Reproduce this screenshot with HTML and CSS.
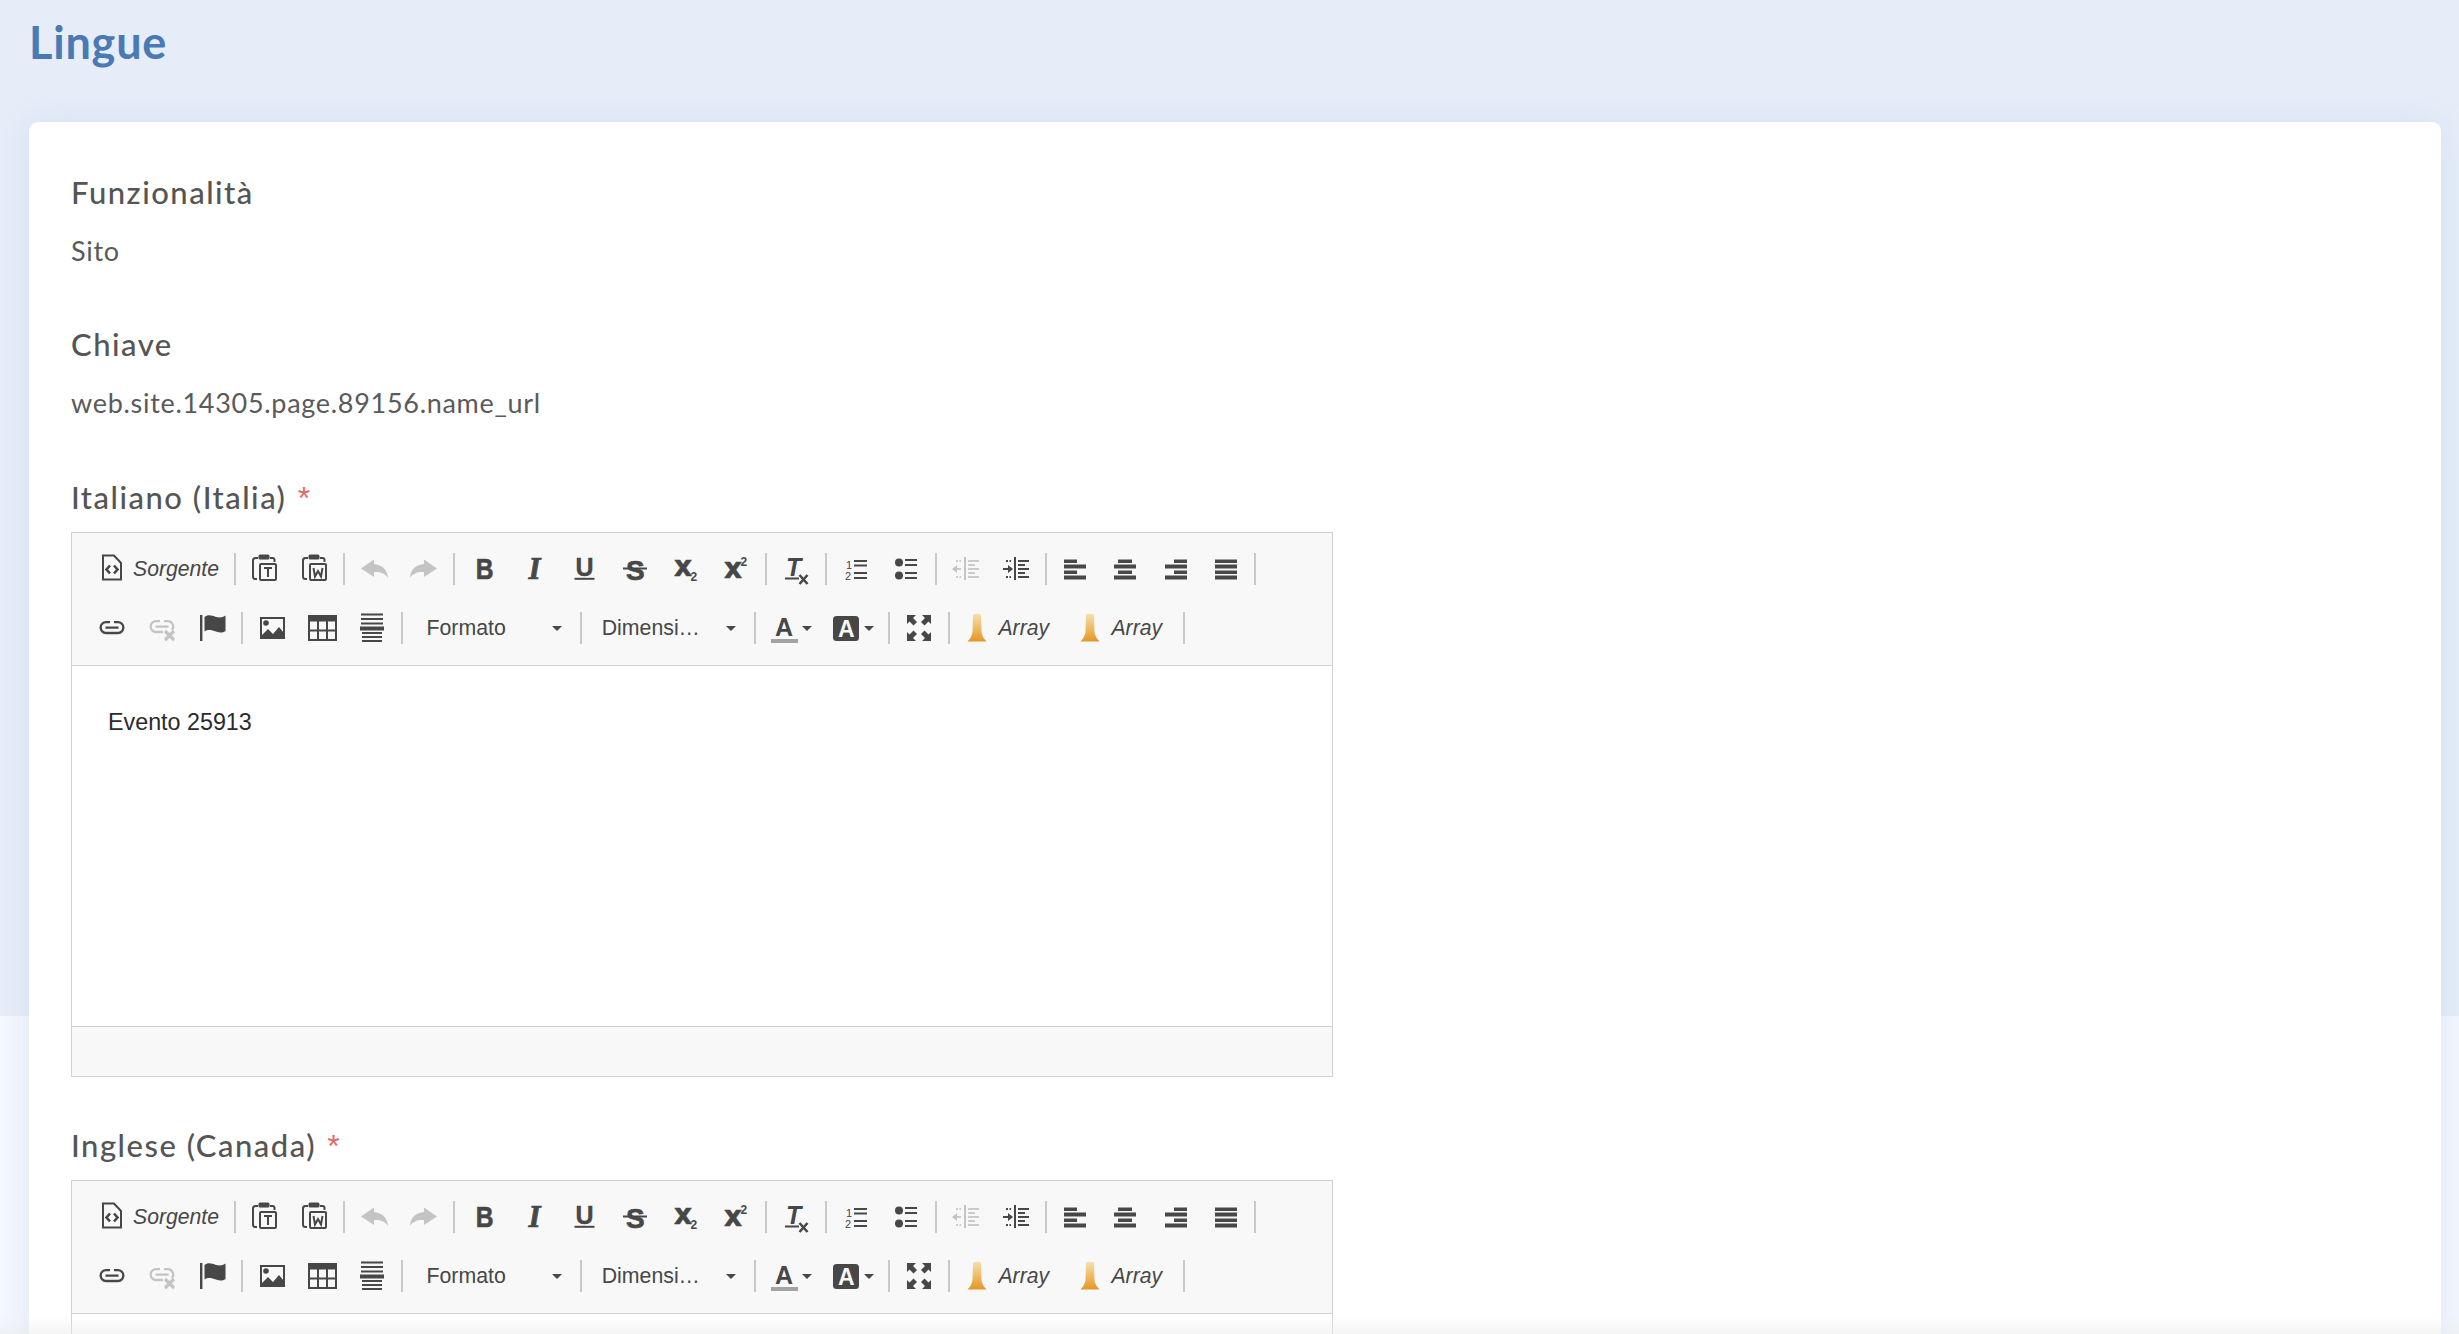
FILE: index.html
```html
<!DOCTYPE html>
<html lang="it">
<head>
<meta charset="utf-8">
<title>Lingue</title>
<link rel="stylesheet" href="styles.css">
</head>
<body>
<svg class="sprite" xmlns="http://www.w3.org/2000/svg">
  <defs>
    <linearGradient id="torch" x1="0" y1="0" x2="0" y2="1"><stop offset="0" stop-color="#f5e0b0"/><stop offset=".55" stop-color="#eeb95e"/><stop offset="1" stop-color="#e3952a"/></linearGradient>
    <symbol id="i-source" viewBox="0 0 32 32"><path class="ln" d="M7 2.500H18L25 10V26.500H7Z"/><path class="ln2" d="M14 12.500l-3.500 4 3.500 4M18 12.500l3.500 4-3.500 4"/></symbol>
    <symbol id="i-paste-t" viewBox="0 0 32 32"><path class="ln" d="M10 5H7.500Q5 5 5 7.500V23.500Q5 26 7.500 26H9M22 5H24.500Q26.500 5 26.500 7V9"/><rect class="fl" x="10.500" y="1.500" width="11" height="5" rx="1.500"/><rect class="ln" x="12" y="11" width="16" height="16" rx="1"/><path class="ln" d="M16 15H24M20 15V24"/></symbol>
    <symbol id="i-paste-w" viewBox="0 0 32 32"><path class="ln" d="M10 5H7.500Q5 5 5 7.500V23.500Q5 26 7.500 26H9M22 5H24.500Q26.500 5 26.500 7V9"/><rect class="fl" x="10.500" y="1.500" width="11" height="5" rx="1.500"/><rect class="ln" x="12" y="11" width="16" height="16" rx="1"/><path class="ln" d="M15.500 15L17 23.500 20 18 23 23.500 24.500 15"/></symbol>
    <symbol id="i-undo" viewBox="0 0 32 32"><path class="fg" d="M16 6.500L3 15.500 16 24V19C22 18.500 27 20 30 25 29.500 16 23 11.500 16 11Z"/></symbol>
    <symbol id="i-redo" viewBox="0 0 32 32"><path class="fg" d="M16 6.500L29 15.500 16 24V19C10 18.500 5 20 2 25 2.500 16 9 11.500 16 11Z"/></symbol>
    <symbol id="i-bold" viewBox="0 0 32 32"><text class="g g-b" x="8.500" y="26" transform="translate(1.600 0) scale(.85 1)">B</text></symbol>
    <symbol id="i-italic" viewBox="0 0 32 32"><text class="g g-i" x="10.500" y="26">I</text></symbol>
    <symbol id="i-underline" viewBox="0 0 32 32"><text class="g g-u" x="7.500" y="22.500">U</text><rect class="fl" x="6.500" y="24.800" width="20" height="2"/></symbol>
    <symbol id="i-strike" viewBox="0 0 32 32"><text class="g g-s" x="8" y="26.500">S</text><rect class="fl" x="5" y="14.500" width="24" height="2"/></symbol>
    <symbol id="i-sub" viewBox="0 0 32 32"><text class="g g-x" x="6" y="23">x</text><text class="g g-n" x="22.500" y="27.500">2</text></symbol>
    <symbol id="i-sup" viewBox="0 0 32 32"><text class="g g-x" x="6" y="25">x</text><text class="g g-n" x="22.500" y="13">2</text></symbol>
    <symbol id="i-clear" viewBox="0 0 32 32"><text class="g g-t" x="5" y="23">T</text><rect class="fl" x="4" y="24.500" width="14" height="2"/><path class="ln2" d="M18.500 22L26.500 31M26.500 22L18.500 31"/></symbol>
    <symbol id="i-ol" viewBox="0 0 32 32"><text class="g g-l" x="6" y="15.500">1</text><text class="g g-l" x="5" y="27">2</text><path class="ln" d="M14 8H27M14 12.500H27M14 20H27M14 25H27"/></symbol>
    <symbol id="i-ul" viewBox="0 0 32 32"><circle class="fl" cx="9" cy="9.500" r="4"/><circle class="fl" cx="9" cy="22.500" r="4"/><path class="ln" d="M15 7H27M15 12H27M15 20H27M15 25H27"/></symbol>
    <symbol id="i-outdent" viewBox="0 0 32 32"><rect class="fg" x="14" y="4" width="2" height="23"/><path class="ln-g" d="M3 16H11"/><path class="fg" d="M2 16L7 12V20Z"/><path class="ln-g" d="M18 8H29M18 12H25M18 16H29M18 20H25M18 24H29"/><path class="dots" d="M6 8H11M6 24H11"/></symbol>
    <symbol id="i-indent" viewBox="0 0 32 32"><rect class="fl" x="14" y="4" width="2" height="23"/><path class="ln" d="M3 16H11"/><path class="fl" d="M13 16L8 12V20Z"/><path class="ln" d="M18 8H29M18 12H25M18 16H29M18 20H25M18 24H29"/><path class="dots dk" d="M6 8H11M6 24H11"/></symbol>
    <symbol id="i-al" viewBox="0 0 32 32"><path class="fl" d="M5 6.500H18V10H5ZM5 11.500H27V15.500H5ZM5 17.500H18V21H5ZM5 22.500H27V26.500H5Z"/></symbol>
    <symbol id="i-ac" viewBox="0 0 32 32"><path class="fl" d="M9 6.500H23V10H9ZM5 11.500H27V15.500H5ZM9 17.500H23V21H9ZM5 22.500H27V26.500H5Z"/></symbol>
    <symbol id="i-ar" viewBox="0 0 32 32"><path class="fl" d="M14 6.500H27V10H14ZM5 11.500H27V15.500H5ZM14 17.500H27V21H14ZM5 22.500H27V26.500H5Z"/></symbol>
    <symbol id="i-aj" viewBox="0 0 32 32"><path class="fl" d="M5 6.500H27V10H5ZM5 11.500H27V15.500H5ZM5 17.500H27V21H5ZM5 22.500H27V26.500H5Z"/></symbol>
    <symbol id="i-link" viewBox="0 0 32 32"><path class="ln3" d="M14 10.200H10A5.400 5.400 0 0 0 10 21H19M18 10.200H22A5.400 5.400 0 0 1 22 21H19M9.500 15.600H22.500"/></symbol>
    <symbol id="i-unlink" viewBox="0 0 32 32"><path class="ln3g" d="M14 9.200H10A5.400 5.400 0 0 0 10 20H17M18 9.200H22A5.400 5.400 0 0 1 26 18M9.500 14.600H22.500"/><path class="xg" d="M19 19L28 28M28 19L19 28"/></symbol>
    <symbol id="i-flag" viewBox="0 0 32 32"><rect class="fl" x="4" y="3" width="2.400" height="26"/><path class="fl" d="M8.500 5C12 2 16 3.500 20 5 24 6 27 5.500 29.500 3.500V19C26.500 21 23.500 21 20 19.500 16 18 12 17 8.500 19.500Z"/></symbol>
    <symbol id="i-image" viewBox="0 0 32 32"><rect class="ln" x="5" y="6" width="23" height="20"/><circle class="fl" cx="10" cy="11" r="2.800"/><path class="fl" d="M5 26V24L12 17 17 22 23 15 28 21V26Z"/></symbol>
    <symbol id="i-table" viewBox="0 0 32 32"><rect class="fl" x="2" y="3" width="29" height="6.500"/><rect class="ln" x="3" y="4" width="27" height="24"/><path class="ln" d="M12 9V28M21 9V28M3 18.500H30"/></symbol>
    <symbol id="i-hr" viewBox="0 0 32 32"><path class="ln" d="M5 2.500H27M5 7H27M5 11.500H27M6 21H26M6 25H26M6 29H26"/><rect class="fl" x="4" y="14.500" width="24" height="4"/></symbol>
    <symbol id="i-color" viewBox="0 0 32 32"><text class="g g-a" x="7" y="24">A</text><rect class="fg2" x="3" y="27" width="27" height="4"/></symbol>
    <symbol id="i-bgcolor" viewBox="0 0 32 32"><rect class="fl" x="3" y="4" width="26" height="25" rx="3.500"/><text class="g g-aw" x="8" y="24.500">A</text></symbol>
    <symbol id="i-max" viewBox="0 0 32 32"><path class="fl" d="M4 3H13L10 6 14 10 10.500 13.500 6.500 9.500 4 12ZM28 3H19L22 6 18 10 21.500 13.500 25.500 9.500 28 12ZM4 29H13L10 26 14 22 10.500 18.500 6.500 22.500 4 20ZM28 29H19L22 26 18 22 21.500 18.500 25.500 22.500 28 20Z"/></symbol>
    <symbol id="i-torch" viewBox="0 0 32 32"><path fill="url(#torch)" d="M12 2.500Q16 1 20 2.500L20.500 20Q21 25 25.500 29.500H6.500Q11 25 11.500 20Z"/></symbol>
  </defs>
</svg>

<main class="page">
  <h1 class="title">Lingue</h1>
  <section class="card">
    <div class="field">
      <h2 class="label">Funzionalità</h2>
      <p class="value">Sito</p>
    </div>
    <div class="field">
      <h2 class="label">Chiave</h2>
      <p class="value">web.site.14305.page.89156.name_url</p>
    </div>

    <div class="field-editor">
      <h2 class="label">Italiano (Italia) <span class="req">*</span></h2>
      <div class="editor">
        <div class="toolbar">
          <div class="row">
            <span class="btn btn-source"><svg class="ic"><use href="#i-source"/></svg><span class="btn-text">Sorgente</span></span><i class="sep"></i>
            <span class="btn"><svg class="ic"><use href="#i-paste-t"/></svg></span><span class="btn"><svg class="ic"><use href="#i-paste-w"/></svg></span><i class="sep"></i>
            <span class="btn"><svg class="ic"><use href="#i-undo"/></svg></span><span class="btn"><svg class="ic"><use href="#i-redo"/></svg></span><i class="sep"></i>
            <span class="btn"><svg class="ic"><use href="#i-bold"/></svg></span><span class="btn"><svg class="ic"><use href="#i-italic"/></svg></span><span class="btn"><svg class="ic"><use href="#i-underline"/></svg></span><span class="btn"><svg class="ic"><use href="#i-strike"/></svg></span><span class="btn"><svg class="ic"><use href="#i-sub"/></svg></span><span class="btn"><svg class="ic"><use href="#i-sup"/></svg></span><i class="sep sep-wide"></i>
            <span class="btn"><svg class="ic"><use href="#i-clear"/></svg></span><i class="sep"></i>
            <span class="btn"><svg class="ic"><use href="#i-ol"/></svg></span><span class="btn"><svg class="ic"><use href="#i-ul"/></svg></span><i class="sep"></i>
            <span class="btn"><svg class="ic"><use href="#i-outdent"/></svg></span><span class="btn"><svg class="ic"><use href="#i-indent"/></svg></span><i class="sep"></i>
            <span class="btn"><svg class="ic"><use href="#i-al"/></svg></span><span class="btn"><svg class="ic"><use href="#i-ac"/></svg></span><span class="btn"><svg class="ic"><use href="#i-ar"/></svg></span><span class="btn"><svg class="ic"><use href="#i-aj"/></svg></span><i class="sep"></i>
          </div>
          <div class="row">
            <span class="btn"><svg class="ic"><use href="#i-link"/></svg></span><span class="btn"><svg class="ic"><use href="#i-unlink"/></svg></span><span class="btn"><svg class="ic"><use href="#i-flag"/></svg></span><i class="sep"></i>
            <span class="btn"><svg class="ic"><use href="#i-image"/></svg></span><span class="btn"><svg class="ic"><use href="#i-table"/></svg></span><span class="btn"><svg class="ic"><use href="#i-hr"/></svg></span><i class="sep"></i>
            <span class="combo combo-format"><span class="combo-text">Formato</span><i class="caret"></i></span><i class="sep"></i>
            <span class="combo combo-size"><span class="combo-text">Dimensi…</span><i class="caret"></i></span><i class="sep"></i>
            <span class="btn-drop"><svg class="ic"><use href="#i-color"/></svg><i class="caret"></i></span><span class="btn-drop"><svg class="ic"><use href="#i-bgcolor"/></svg><i class="caret"></i></span><i class="sep"></i>
            <span class="btn"><svg class="ic"><use href="#i-max"/></svg></span><i class="sep"></i>
            <span class="btn-array"><svg class="ic"><use href="#i-torch"/></svg><span class="btn-text">Array</span></span><span class="btn-array"><svg class="ic"><use href="#i-torch"/></svg><span class="btn-text">Array</span></span><i class="sep"></i>
          </div>
        </div>
        <div class="content"><p class="content-text">Evento 25913</p></div>
        <div class="status"></div>
      </div>
    </div>

    <div class="field-editor">
      <h2 class="label">Inglese (Canada) <span class="req">*</span></h2>
      <div class="editor">
        <div class="toolbar">
          <div class="row">
            <span class="btn btn-source"><svg class="ic"><use href="#i-source"/></svg><span class="btn-text">Sorgente</span></span><i class="sep"></i>
            <span class="btn"><svg class="ic"><use href="#i-paste-t"/></svg></span><span class="btn"><svg class="ic"><use href="#i-paste-w"/></svg></span><i class="sep"></i>
            <span class="btn"><svg class="ic"><use href="#i-undo"/></svg></span><span class="btn"><svg class="ic"><use href="#i-redo"/></svg></span><i class="sep"></i>
            <span class="btn"><svg class="ic"><use href="#i-bold"/></svg></span><span class="btn"><svg class="ic"><use href="#i-italic"/></svg></span><span class="btn"><svg class="ic"><use href="#i-underline"/></svg></span><span class="btn"><svg class="ic"><use href="#i-strike"/></svg></span><span class="btn"><svg class="ic"><use href="#i-sub"/></svg></span><span class="btn"><svg class="ic"><use href="#i-sup"/></svg></span><i class="sep sep-wide"></i>
            <span class="btn"><svg class="ic"><use href="#i-clear"/></svg></span><i class="sep"></i>
            <span class="btn"><svg class="ic"><use href="#i-ol"/></svg></span><span class="btn"><svg class="ic"><use href="#i-ul"/></svg></span><i class="sep"></i>
            <span class="btn"><svg class="ic"><use href="#i-outdent"/></svg></span><span class="btn"><svg class="ic"><use href="#i-indent"/></svg></span><i class="sep"></i>
            <span class="btn"><svg class="ic"><use href="#i-al"/></svg></span><span class="btn"><svg class="ic"><use href="#i-ac"/></svg></span><span class="btn"><svg class="ic"><use href="#i-ar"/></svg></span><span class="btn"><svg class="ic"><use href="#i-aj"/></svg></span><i class="sep"></i>
          </div>
          <div class="row">
            <span class="btn"><svg class="ic"><use href="#i-link"/></svg></span><span class="btn"><svg class="ic"><use href="#i-unlink"/></svg></span><span class="btn"><svg class="ic"><use href="#i-flag"/></svg></span><i class="sep"></i>
            <span class="btn"><svg class="ic"><use href="#i-image"/></svg></span><span class="btn"><svg class="ic"><use href="#i-table"/></svg></span><span class="btn"><svg class="ic"><use href="#i-hr"/></svg></span><i class="sep"></i>
            <span class="combo combo-format"><span class="combo-text">Formato</span><i class="caret"></i></span><i class="sep"></i>
            <span class="combo combo-size"><span class="combo-text">Dimensi…</span><i class="caret"></i></span><i class="sep"></i>
            <span class="btn-drop"><svg class="ic"><use href="#i-color"/></svg><i class="caret"></i></span><span class="btn-drop"><svg class="ic"><use href="#i-bgcolor"/></svg><i class="caret"></i></span><i class="sep"></i>
            <span class="btn"><svg class="ic"><use href="#i-max"/></svg></span><i class="sep"></i>
            <span class="btn-array"><svg class="ic"><use href="#i-torch"/></svg><span class="btn-text">Array</span></span><span class="btn-array"><svg class="ic"><use href="#i-torch"/></svg><span class="btn-text">Array</span></span><i class="sep"></i>
          </div>
        </div>
        <div class="content"></div>
      </div>
    </div>
  </section>
</main>
<div class="fade"></div>
</body>
</html>
```

FILE: styles.css
```css
* { box-sizing: border-box; }
html, body { margin: 0; height: 1334px; overflow: hidden; }
body {
  background: linear-gradient(#e6edf8 0, #e6edf8 1016px, #f3f7fe 1016px);
  font-family: Lato, "Noto Sans", sans-serif;
  color: #555;
}
.sprite { width: 0; height: 0; position: absolute; }
.page { padding: 0 18px 0 29px; height: 1334px; overflow: hidden; }
.title {
  margin: 0;
  height: 122px;
  padding-top: 17px;
  font-size: 45px;
  line-height: 50px;
  font-weight: 700;
  letter-spacing: .8px;
  color: #4a7ab5;
}
.card {
  background: #fff;
  border-radius: 9px 9px 0 0;
  padding: 50px 42px 0;
  box-shadow: 0 0 30px rgba(170, 190, 235, .28);
  height: 1300px;
}
.field { margin-bottom: 57px; }
.label {
  margin: 0;
  font-size: 31px;
  line-height: 40px;
  font-weight: 500;
  color: #555;
  letter-spacing: 1.5px;
}
.value {
  margin: 22px 0 0;
  font-size: 27px;
  line-height: 34px;
  color: #5a5a5a;
  letter-spacing: .7px;
}
.field + .field { margin-top: -1px; }
.req { color: #e26a66; font-family: "Liberation Sans", Arial, sans-serif; font-size: 32px; line-height: 0; letter-spacing: 0; margin-left: 2px; }
.field-editor { margin-bottom: 48px; }
.field-editor .label { margin-bottom: 15px; }
.editor { width: 1262px; border: 1px solid #d1d1d1; background: #fff; }
.toolbar { background: #f8f8f8; height: 133px; padding: 6.500px 0 0 15px; border-bottom: 1px solid #d1d1d1; }
.row { display: flex; align-items: center; height: 59px; }
.btn { width: 50.2px; height: 32px; display: flex; justify-content: center; flex: none; }
.ic { width: 32px; height: 32px; flex: none; display: block; }
.btn-source { width: 143px; justify-content: flex-start; align-items: center; }
.btn-source .ic { margin-left: 9px; }
.btn-text { font: italic 21.2px/32px "Liberation Sans", Arial, sans-serif; color: #474747; }
.btn-source .btn-text { margin-left: 5px; }
.sep { width: 2px; height: 32px; margin: 0 3.6px; background: #c9c9c9; flex: none; }
.sep-wide { margin: 0 5.100px; }
.combo { height: 32px; display: flex; align-items: center; flex: none; }
.combo-format { width: 170px; padding-left: 20px; }
.combo-size { width: 165px; padding-left: 16px; }
.combo-text { font: 21.3px/32px "Liberation Sans", Arial, sans-serif; color: #474747; }
.caret { width: 0; height: 0; border: 5.500px solid transparent; border-top: 5.500px solid #474747; border-bottom: 0; flex: none; }
.combo .caret { margin-left: auto; margin-right: 15px; }
.btn-drop { display: flex; align-items: center; width: 62.500px; height: 32px; flex: none; padding-left: 8px; }
.btn-drop .caret { margin-left: 2px; }
.btn-array { display: flex; align-items: center; width: 113px; height: 32px; flex: none; padding-left: 8px; }
.btn-array .btn-text { margin-left: 5px; }
.content { height: 360px; padding: 42px 36px; background: #fff; }
.content-text { margin: 0; font: 23.3px/28px "Liberation Sans", Arial, sans-serif; color: #2b2b2b; }
.status { height: 50px; background: #f8f8f8; border-top: 1px solid #d1d1d1; }
.fade { position: absolute; left: 0; right: 0; top: 1316px; height: 18px; background: linear-gradient(rgba(240,240,240,0), rgba(236,236,236,.55)); pointer-events: none; }

/* icon paint */
.ln { fill: none; stroke: #474747; stroke-width: 2; }
.ln2 { fill: none; stroke: #474747; stroke-width: 2.600; }
.ln3 { fill: none; stroke: #474747; stroke-width: 2.300; }
.ln3g { fill: none; stroke: #c4c4c4; stroke-width: 2.300; }
.xg { fill: none; stroke: #c4c4c4; stroke-width: 3.200; }
.ln-g { fill: none; stroke: #cbcbcb; stroke-width: 2; }
.fl { fill: #474747; }
.fg { fill: #c4c4c4; }
.fg2 { fill: #a3a3a3; }
.dots { fill: none; stroke: #cbcbcb; stroke-width: 2; stroke-dasharray: 2 1.500; }
.dots.dk { stroke: #474747; }
.g { fill: #474747; font-family: "Liberation Sans", Arial, sans-serif; font-weight: 700; }
.g-b { font-size: 29px; stroke: #474747; stroke-width: .6px; }
.g-i { font: italic 700 31px "Liberation Serif", serif; stroke: #474747; stroke-width: .7px; }
.g-u { font-size: 25px; stroke: #474747; stroke-width: .4px; }
.g-s { font-size: 28px; stroke: #474747; stroke-width: .6px; }
.g-x { font-size: 28px; font-family: "DejaVu Sans", sans-serif; stroke: #474747; stroke-width: .5px; }
.g-n { font-size: 12px; }
.g-t { font: italic 700 25px "Liberation Sans", sans-serif; }
.g-l { font-size: 11px; font-weight: 400; }
.g-a { font-size: 25px; }
.g-aw { font-size: 23px; fill: #f8f8f8; }
```
